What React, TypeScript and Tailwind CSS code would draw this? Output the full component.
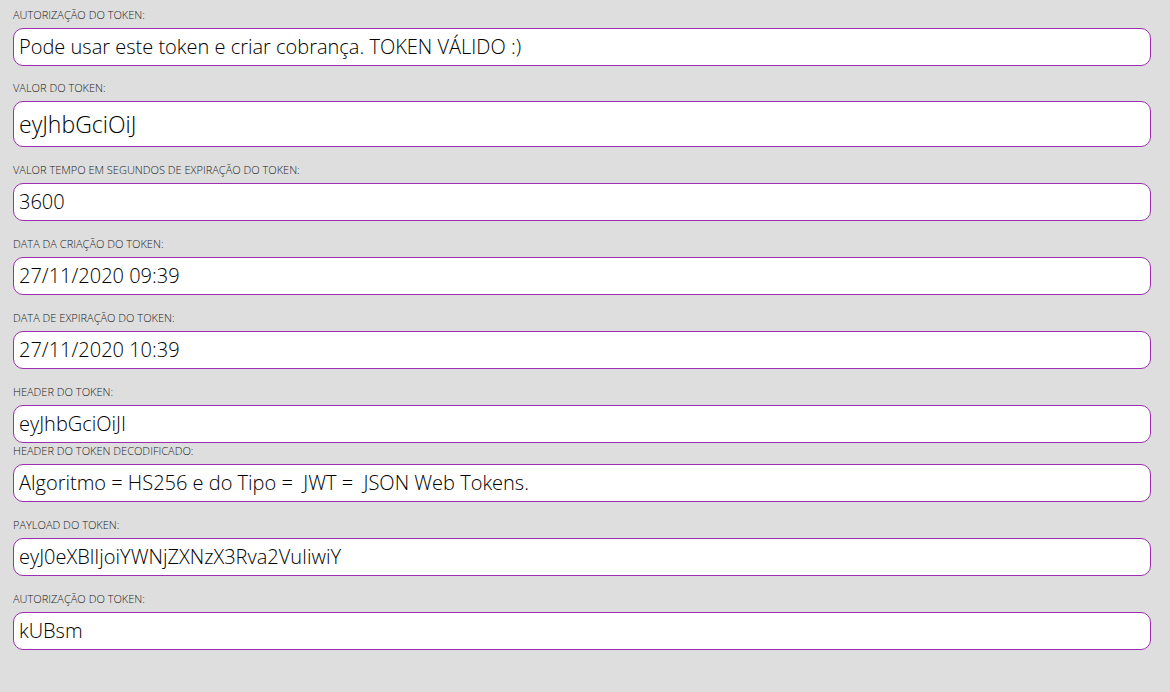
import React from "react";

type Row = { label: string; value: string; big?: boolean; mt: string };

const rows: Row[] = [
  { label: "AUTORIZAÇÃO DO TOKEN:", value: "Pode usar este token e criar cobrança. TOKEN VÁLIDO :)", mt: "mt-0" },
  { label: "VALOR DO TOKEN:", value: "eyJhbGciOiJ", big: true, mt: "mt-[15px]" },
  { label: "VALOR TEMPO EM SEGUNDOS DE EXPIRAÇÃO DO TOKEN:", value: "3600", mt: "mt-[16px]" },
  { label: "DATA DA CRIAÇÃO DO TOKEN:", value: "27/11/2020 09:39", mt: "mt-[16px]" },
  { label: "DATA DE EXPIRAÇÃO DO TOKEN:", value: "27/11/2020 10:39", mt: "mt-[16px]" },
  { label: "HEADER DO TOKEN:", value: "eyJhbGciOiJI", mt: "mt-[16px]" },
  { label: "HEADER DO TOKEN DECODIFICADO:", value: "Algoritmo = HS256 e do Tipo =  JWT =  JSON Web Tokens.", mt: "mt-[1px]" },
  { label: "PAYLOAD DO TOKEN:", value: "eyJ0eXBlIjoiYWNjZXNzX3Rva2VuIiwiY", mt: "mt-[16px]" },
  { label: "AUTORIZAÇÃO DO TOKEN:", value: "kUBsm", mt: "mt-[16px]" },
];

export default function App() {
  return (
    <div
      className="w-[1170px] h-[692px] bg-[#dedede] px-[13px] pt-[8px] overflow-hidden"
      style={{ fontFamily: '"Open Sans", "Liberation Sans", sans-serif' }}
    >
      {rows.map((r, i) => (
        <div key={i} className={r.mt}>
          <div className="text-[11px] leading-[14px] text-[#1a1a1a] font-light whitespace-pre">{r.label}</div>
          <div
            className={`mt-[6px] w-[1138px] bg-white border border-[#9c2fb0] rounded-[10px] flex items-center px-[5px] text-black font-light whitespace-pre ${
              r.big ? "h-[46px] text-[23px]" : "h-[38px] text-[20px]"
            }`}
          >
            {r.value}
          </div>
        </div>
      ))}
    </div>
  );
}
